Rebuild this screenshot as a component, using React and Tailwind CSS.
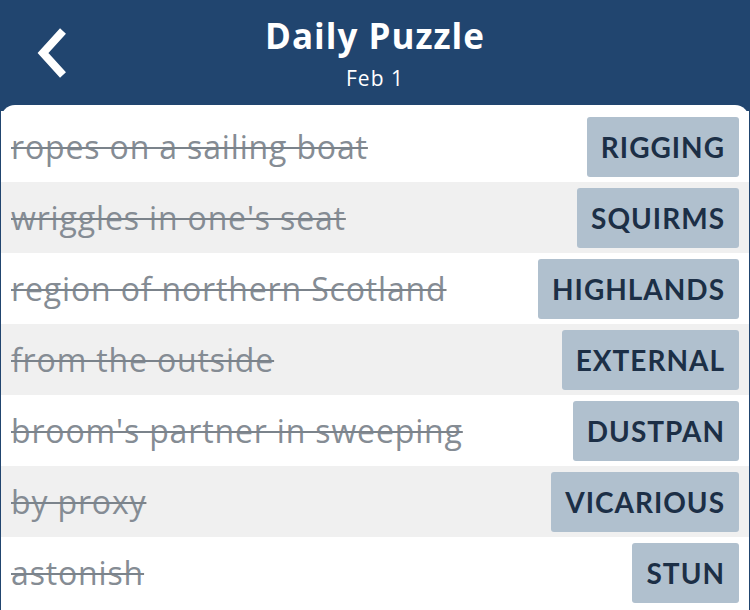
import React from "react";

const rows = [
  ["ropes on a sailing boat", "RIGGING"],
  ["wriggles in one's seat", "SQUIRMS"],
  ["region of northern Scotland", "HIGHLANDS"],
  ["from the outside", "EXTERNAL"],
  ["broom's partner in sweeping", "DUSTPAN"],
  ["by proxy", "VICARIOUS"],
  ["astonish", "STUN"],
];

export default function App() {
  return (
    <div className="w-[750px] h-[610px] overflow-hidden bg-[#21456f]" style={{ fontFamily: "'Open Sans', Lato, sans-serif" }}>
      <div className="relative h-[105px] flex flex-col items-center">
        <svg className="absolute left-[34px] top-[26px]" width="36" height="54" viewBox="0 0 36 54">
          <path d="M29 5 L9 27 L29 49" fill="none" stroke="white" strokeWidth="8" strokeLinecap="butt" strokeLinejoin="miter" />
        </svg>
        <div className="mt-[12px] text-white font-bold text-[35px] leading-[48px] tracking-[1px]">Daily Puzzle</div>
        <div className="mt-[6px] text-white text-[21px] leading-[24px] tracking-[1px]">Feb 1</div>
      </div>
      <div className="bg-white rounded-t-[14px] pt-[6px] h-[505px] mx-[1px]">
        {rows.map(([clue, ans], i) => (
          <div key={i} className={"h-[71px] flex items-center justify-between pl-[10px] pr-[10px] " + (i % 2 === 1 ? "bg-[#f0f0f0]" : "bg-white")}>
            <span className="text-[32px] tracking-[0.85px] text-[#858c94] line-through decoration-[2px] decoration-[#7b838b]">{clue}</span>
            <span className="h-[60px] flex items-center px-[14px] rounded-[3px] bg-[#b0c0ce] text-[#1c2f46] font-bold text-[28px] tracking-[1px]" style={{ fontFamily: "Lato, sans-serif" }}>{ans}</span>
          </div>
        ))}
      </div>
    </div>
  );
}
